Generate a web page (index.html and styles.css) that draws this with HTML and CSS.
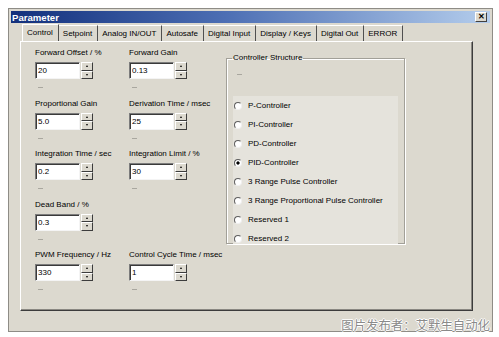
FILE: index.html
```html
<!DOCTYPE html>
<html>
<head>
<title>Parameter</title>
<link rel="stylesheet" href="styles.css">
</head>
<body>

<div class="window">
    <div class="titlebar">
        <span class="title">Parameter</span>
        <span class="close">&#x2715;</span>
    </div>

    <div class="tabs">
        <span class="tab active">Control</span>
        <span class="tab">Setpoint</span>
        <span class="tab">Analog IN/OUT</span>
        <span class="tab">Autosafe</span>
        <span class="tab">Digital Input</span>
        <span class="tab">Display / Keys</span>
        <span class="tab">Digital Out</span>
        <span class="tab">ERROR</span>
    </div>

    <div class="panel">
        <div class="fields">
            <div class="field">
                <label>Forward Offset / %</label>
                <div class="spinbox"><input type="text" value="20"><span class="spin"><i class="up"></i><i class="down"></i></span></div>
                <span class="dash"></span>
            </div>
            <div class="field">
                <label>Forward Gain</label>
                <div class="spinbox"><input type="text" value="0.13"><span class="spin"><i class="up"></i><i class="down"></i></span></div>
                <span class="dash"></span>
            </div>
            <div class="field">
                <label>Proportional Gain</label>
                <div class="spinbox"><input type="text" value="5.0"><span class="spin"><i class="up"></i><i class="down"></i></span></div>
                <span class="dash"></span>
            </div>
            <div class="field">
                <label>Derivation Time / msec</label>
                <div class="spinbox"><input type="text" value="25"><span class="spin"><i class="up"></i><i class="down"></i></span></div>
                <span class="dash"></span>
            </div>
            <div class="field">
                <label>Integration Time / sec</label>
                <div class="spinbox"><input type="text" value="0.2"><span class="spin"><i class="up"></i><i class="down"></i></span></div>
                <span class="dash"></span>
            </div>
            <div class="field">
                <label>Integration Limit / %</label>
                <div class="spinbox"><input type="text" value="30"><span class="spin"><i class="up"></i><i class="down"></i></span></div>
                <span class="dash"></span>
            </div>
            <div class="field">
                <label>Dead Band / %</label>
                <div class="spinbox"><input type="text" value="0.3"><span class="spin"><i class="up"></i><i class="down"></i></span></div>
                <span class="dash"></span>
            </div>
            <div class="field"></div>
            <div class="field">
                <label>PWM Frequency / Hz</label>
                <div class="spinbox"><input type="text" value="330"><span class="spin"><i class="up"></i><i class="down"></i></span></div>
                <span class="dash"></span>
            </div>
            <div class="field">
                <label>Control Cycle Time / msec</label>
                <div class="spinbox"><input type="text" value="1"><span class="spin"><i class="up"></i><i class="down"></i></span></div>
                <span class="dash"></span>
            </div>
        </div>

        <fieldset class="group">
            <legend>Controller Structure</legend>
            <span class="dash group-dash"></span>
            <div class="radios">
                <div class="radio"><span class="dot"></span>P-Controller</div>
                <div class="radio"><span class="dot"></span>PI-Controller</div>
                <div class="radio"><span class="dot"></span>PD-Controller</div>
                <div class="radio"><span class="dot checked"></span>PID-Controller</div>
                <div class="radio"><span class="dot"></span>3 Range Pulse Controller</div>
                <div class="radio"><span class="dot"></span>3 Range Proportional Pulse Controller</div>
                <div class="radio"><span class="dot"></span>Reserved 1</div>
                <div class="radio"><span class="dot"></span>Reserved 2</div>
            </div>
        </fieldset>
    </div>
</div>

<div class="watermark">图片发布者：艾默生自动化</div>

</body>
</html>
```

FILE: styles.css
```css
body {
    margin: 0;
    background-color: #fff;
    font-family: "Liberation Sans", Arial, sans-serif;
    font-size: 8px;
    color: #000;
}
.window {
    margin: 8px 0 0 8px;
    width: 485px;
    height: 324px;
    padding: 1px;
    box-sizing: border-box;
    background-color: #dcd9cf;
    border: 1px solid #8e8c86;
}
.titlebar {
    margin: 1px 1px 0;
    height: 12px;
    display: flex;
    align-items: center;
    justify-content: space-between;
    background: linear-gradient(to right, #12307c, #4d6fb4 45%, #b4cdec);
}
.title {
    color: #fff;
    font-weight: bold;
    font-size: 9.6px;
    padding-left: 1px;
}
.close {
    width: 12px;
    height: 10px;
    margin-right: 3px;
    background-color: #dcd9cf;
    border: 1px solid;
    border-color: #fff #404040 #404040 #fff;
    box-sizing: border-box;
    font-size: 8px;
    font-weight: bold;
    line-height: 8px;
    text-align: center;
    color: #000;
}
.tabs {
    display: flex;
    margin: 1px 0 0 12px;
    height: 17px;
    align-items: flex-end;
}
.tab {
    height: 15px;
    line-height: 15px;
    padding: 0 5px 0 4px;
    border-right: 1px solid #505050;
    border-top: 1px solid #fff;
}
.tab.active {
    height: 16px;
    border-left: 1px solid #fff;
}
.panel {
    margin-left: 10px;
    width: 453px;
    height: 270px;
    box-sizing: border-box;
    display: flex;
    align-items: flex-start;
    border: 1px solid;
    border-color: #fff #3c3c3c #3c3c3c #fff;
    box-shadow: inset -1px -1px 0 #8a8882;
}
.fields {
    display: grid;
    grid-template-columns: 94px 94px;
    padding: 5px 0 0 14px;
}
.field {
    height: 50.5px;
    display: flex;
    flex-direction: column;
}
.field label {
    line-height: 11px;
    white-space: nowrap;
}
.spinbox {
    display: flex;
    gap: 1px;
    margin-top: 4px;
}
.spinbox input {
    width: 45px;
    height: 17px;
    box-sizing: border-box;
    margin: 0;
    padding: 0 2px;
    font: inherit;
    color: #000;
    background-color: #fff;
    border: 1px solid;
    border-color: #7c7c7c #f4f4f4 #f4f4f4 #7c7c7c;
    box-shadow: inset 1px 1px 0 #3a3a3a;
    outline: none;
}
.spin {
    display: flex;
    flex-direction: column;
    width: 12px;
    height: 17px;
}
.spin i {
    flex: 1;
    display: flex;
    align-items: center;
    justify-content: center;
    background-color: #dcd9cf;
    border: 1px solid;
    border-color: #fff #3c3c3c #3c3c3c #fff;
}
.spin i::before {
    content: "";
    width: 0;
    height: 0;
    border-left: 1.5px solid transparent;
    border-right: 1.5px solid transparent;
}
.spin .up::before {
    border-bottom: 2px solid #000;
}
.spin .down::before {
    border-top: 2px solid #000;
}
.dash {
    display: block;
    width: 5px;
    height: 1px;
    margin: 8px 0 0 3px;
    background-color: #a9a79f;
}
.group {
    margin: 11px 0 0 3px;
    width: 179px;
    height: 191px;
    box-sizing: border-box;
    padding: 0 6px;
    border: 1px solid #a2a098;
    box-shadow: 1px 1px 0 #fff, inset 1px 1px 0 #fff;
}
.group legend {
    padding: 0 1px;
    margin-left: -1px;
    line-height: 10px;
}
.group-dash {
    margin: 11px 0 0 4px;
}
.radios {
    margin-top: 21px;
    height: 148px;
    overflow: hidden;
    background-color: #e5e3dc;
}
.radio {
    height: 19px;
    display: flex;
    align-items: center;
    gap: 6px;
    white-space: nowrap;
}
.dot {
    width: 8px;
    height: 8px;
    margin-left: 1px;
    box-sizing: border-box;
    border-radius: 50%;
    background-color: #fff;
    border: 1px solid;
    border-color: #5e5e5e #f0f0f0 #f0f0f0 #5e5e5e;
}
.dot.checked {
    background: radial-gradient(circle, #000 0 1.4px, #fff 1.8px);
}
.watermark {
    position: absolute;
    right: 9px;
    top: 318px;
    font-family: "Noto Sans CJK SC", sans-serif;
    font-size: 12.4px;
    line-height: 14px;
    color: #8a8a8a;
    text-shadow: 1px 0 #fff, -1px 0 #fff, 0 1px #fff, 0 -1px #fff;
}
```
